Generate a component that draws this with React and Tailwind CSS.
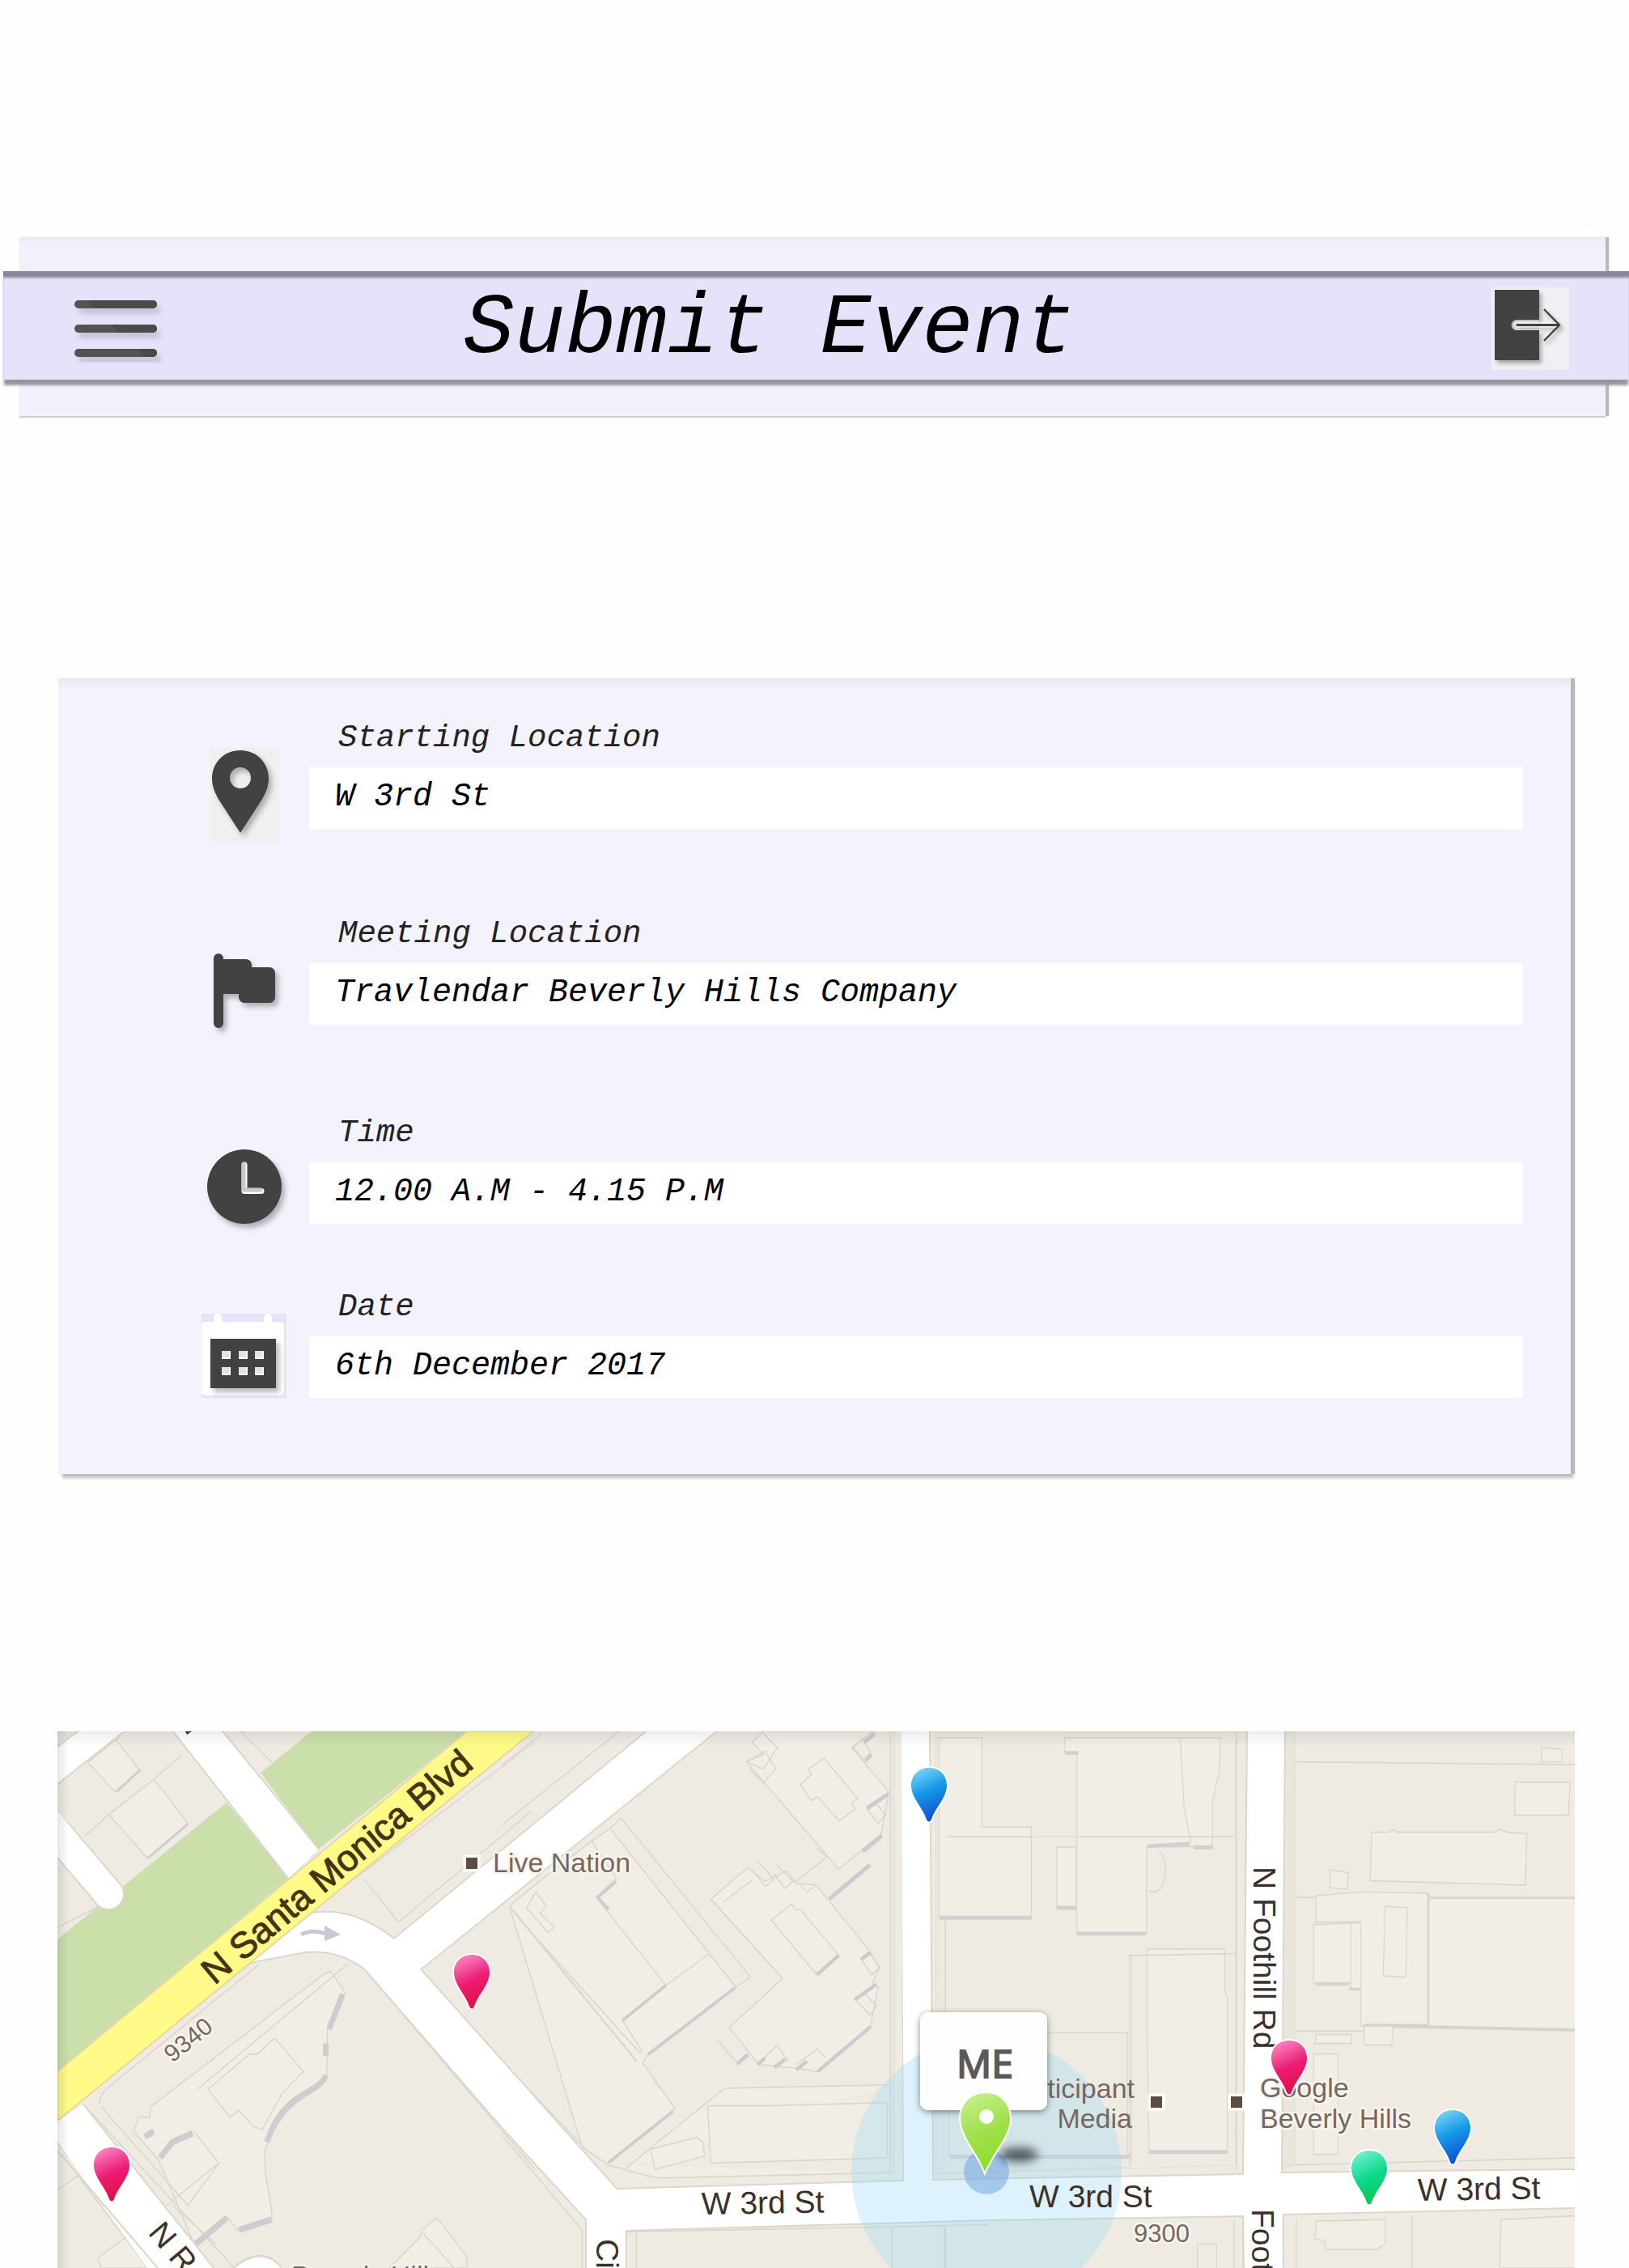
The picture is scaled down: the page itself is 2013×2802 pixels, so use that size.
import React from "react";

const MONO = "font-['Liberation_Mono',monospace] italic";

function MenuIcon() {
  return (
    <svg viewBox="0 0 110 84" className="block h-[84px] w-[110px]" aria-hidden="true">
      <defs>
        <filter id="soft" x="-20%" y="-20%" width="150%" height="150%">
          <feDropShadow dx="5" dy="7" stdDeviation="3" floodColor="#000" floodOpacity="0.14" />
        </filter>
      </defs>
      <g fill="#525252" filter="url(#soft)">
        <rect x="0" y="7" width="102" height="10" rx="5" />
        <rect x="0" y="37" width="102" height="10" rx="5" />
        <rect x="0" y="67" width="102" height="10" rx="5" />
      </g>
      <g fill="#4a4a4a">
        <path d="M17 7h80a5 5 0 0 1 0 10H24z" />
        <path d="M46 37h51a5 5 0 0 1 0 10H54z" />
        <path d="M78 67h19a5 5 0 0 1 0 10H86z" />
      </g>
    </svg>
  );
}

function ExitIcon() {
  return (
    <svg viewBox="0 0 96 102" className="block h-[102px] w-[96px]" aria-hidden="true">
      <defs>
        <filter id="exitShade" x="-20%" y="-20%" width="150%" height="150%">
          <feDropShadow dx="3" dy="4" stdDeviation="2.5" floodColor="#000" floodOpacity="0.3" />
        </filter>
      </defs>
      <rect width="96" height="102" fill="#f0eff3" />
      <path d="M3 2h56v2H4v86H3z" fill="#fff" />
      <path d="M4 3h55v37H31a6.500 6.500 0 0 0 0 13h28v37H4z" fill="#424242" filter="url(#exitShade)" />
      <path d="M59 41H32a5.500 5.500 0 0 0 0 11h27" fill="#dcdbde" />
      <g fill="none" stroke="#424242" filter="url(#exitShade)">
        <path d="M31 46.500H84" strokeWidth="3" />
        <path d="M65 27L84 46.500L65 66" strokeWidth="2.500" />
      </g>
      <path d="M31 44H80M31 49H80" stroke="#fff" strokeWidth="1" />
    </svg>
  );
}

function IconShade({ id }) {
  return (
    <defs>
      <filter id={id} x="-20%" y="-20%" width="150%" height="150%">
        <feDropShadow dx="4" dy="5" stdDeviation="3" floodColor="#000" floodOpacity="0.28" />
      </filter>
    </defs>
  );
}

function PinIcon() {
  return (
    <svg viewBox="0 0 86 116" className="-mb-4 block h-[116px] w-[86px]" aria-hidden="true">
      <IconShade id="pinShade" />
      <rect width="86" height="116" fill="#f1f0f1" />
      <path
        d="M38 3C18 3 3 18 3 38c0 12 6 22 11 30l24 37 24-37c5-8 11-18 11-30C73 18 58 3 38 3zm0 21a13 13 0 1 1 0 26a13 13 0 0 1 0-26z"
        fill="#424242"
        fillRule="evenodd"
        filter="url(#pinShade)"
      />
    </svg>
  );
}

function FlagIcon() {
  return (
    <svg viewBox="0 0 86 100" className="-mb-3 block h-[100px] w-[86px] overflow-visible" aria-hidden="true">
      <IconShade id="flagShade" />
      <path
        d="M11 0a6 6 0 0 1 6 6V7H45a7 7 0 0 1 7 7v3H74a7 7 0 0 1 7 7V54a7 7 0 0 1-7 7H43a7 7 0 0 1-7-7V50H17V86a6 6 0 0 1-12 0V6a6 6 0 0 1 6-6z"
        fill="#424242"
        filter="url(#flagShade)"
      />
      <path d="M17 6H46M53 16H74" stroke="#fff" strokeWidth="1" />
    </svg>
  );
}

function ClockIcon() {
  return (
    <svg viewBox="0 0 92 92" className="block h-[92px] w-[92px] overflow-visible" aria-hidden="true">
      <IconShade id="clockShade" />
      <circle cx="45" cy="45" r="46" fill="#fff" />
      <circle cx="46" cy="46" r="46" fill="#424242" filter="url(#clockShade)" />
      <path d="M46 19V51.500H67" fill="none" stroke="#fff" strokeWidth="7" strokeLinecap="round" strokeLinejoin="round" />
      <path d="M45 18V50H66" fill="none" stroke="#c9c8cd" strokeWidth="5" strokeLinecap="round" strokeLinejoin="round" />
    </svg>
  );
}

function CalendarIcon() {
  return (
    <svg viewBox="0 0 105 104" className="block h-[104px] w-[105px]" aria-hidden="true">
      <IconShade id="calShade" />
      <rect width="105" height="104" fill="#e6e2fa" />
      <rect x="0" y="10" width="102" height="91" rx="5" fill="#fff" />
      <rect x="15" y="0" width="10" height="20" rx="5" fill="#fff" />
      <rect x="77" y="0" width="10" height="20" rx="5" fill="#fff" />
      <rect x="11" y="31" width="81" height="61" fill="#424242" filter="url(#calShade)" />
      {[25, 46, 66].map((x) =>
        [46, 66].map((y) => (
          <g key={x + "-" + y}>
            <rect x={x} y={y} width="11" height="10" fill="#fff" />
            <rect x={x} y={y} width="9" height="8" fill="#e2e2e4" />
          </g>
        ))
      )}
    </svg>
  );
}

function Field({ id, label, value, icon, className = "" }) {
  return (
    <div className={"flex items-end gap-7 " + className}>
      <div className="flex w-[105px] shrink-0 justify-center">{icon}</div>
      <div className="flex min-w-0 flex-1 flex-col">
        <label htmlFor={id} className={"mb-3 pl-9 text-[39px] leading-[48px] text-[#222] " + MONO}>
          {label}
        </label>
        <input
          id={id}
          type="text"
          defaultValue={value}
          className={"h-[76px] w-full bg-white pb-1 pl-8 text-[40px] text-black outline-none " + MONO}
        />
      </div>
    </div>
  );
}

function Drop({ x, y, fill }) {
  return (
    <path
      transform={"translate(" + x + " " + y + ")"}
      d="M0 0C-13 0-22 9-22 22C-22 37-7 50-3 64Q0 69 3 64C7 50 22 37 22 22C22 9 13 0 0 0z"
      fill={fill}
      stroke="#fff"
      strokeWidth="4"
      paintOrder="stroke"
    />
  );
}

function Poi({ x, y }) {
  return <rect x={x - 7} y={y - 7} width="14" height="14" fill="#5c4c42" stroke="#fff" strokeWidth="7" paintOrder="stroke" />;
}

function CityMap() {
  return (
    <svg
      viewBox="0 0 1875 663"
      className="block h-auto w-full font-['Liberation_Sans',sans-serif]"
      role="img"
      aria-label="Map of W 3rd St, Beverly Hills"
    >
      <defs>
        <linearGradient id="pink" x1="0.3" y1="0" x2="0.6" y2="1">
          <stop offset="0" stopColor="#fb84c2" />
          <stop offset="0.5" stopColor="#ec1c74" />
          <stop offset="1" stopColor="#e00f3c" />
        </linearGradient>
        <linearGradient id="blue" x1="0.3" y1="0" x2="0.6" y2="1">
          <stop offset="0" stopColor="#74d4f8" />
          <stop offset="0.45" stopColor="#1597e6" />
          <stop offset="1" stopColor="#1249cf" />
        </linearGradient>
        <linearGradient id="mint" x1="0.3" y1="0" x2="0.6" y2="1">
          <stop offset="0" stopColor="#6df2d0" />
          <stop offset="0.5" stopColor="#0cd98c" />
          <stop offset="1" stopColor="#10c24d" />
        </linearGradient>
        <linearGradient id="lime" x1="0.3" y1="0" x2="0.6" y2="1">
          <stop offset="0" stopColor="#c4ef86" />
          <stop offset="0.5" stopColor="#a0e04c" />
          <stop offset="1" stopColor="#8edb2c" />
        </linearGradient>
        <linearGradient id="topShade" x1="0" y1="0" x2="0" y2="1">
          <stop offset="0" stopColor="#000" stopOpacity="0.07" />
          <stop offset="1" stopColor="#000" stopOpacity="0" />
        </linearGradient>
        <linearGradient id="leftShade" x1="0" y1="0" x2="1" y2="0">
          <stop offset="0" stopColor="#000" stopOpacity="0.1" />
          <stop offset="1" stopColor="#000" stopOpacity="0" />
        </linearGradient>
        <filter id="pop" x="-20%" y="-20%" width="140%" height="140%">
          <feDropShadow dx="0" dy="2" stdDeviation="4" floodColor="#000" floodOpacity="0.45" />
        </filter>
        <filter id="haze" x="-50%" y="-100%" width="200%" height="300%">
          <feGaussianBlur stdDeviation="6" />
        </filter>
      </defs>

      {/* land and parks */}
      <rect width="1875" height="663" fill="#efebe3" />
      <path d="M314 0H506L322 146L251 51z" fill="#cadfaa" />
      <path d="M0 257L209 88L286 181L0 420z" fill="#cadfaa" />

      {/* lot outlines and buildings, west side */}
      <g transform="translate(-11 -19) scale(0.3827 0.435)" fill="#f2eee6" stroke="#dcd7ce" strokeWidth="4">
        <path d="M125 130L215 65L295 155L215 215z" />
        <path d="M195 280L340 180L450 305L320 405z" />
        <path d="M120 340L195 280M340 180L430 110M230 60L130 130M620 43L720 130" fill="none" />
        <path d="M220 215L297 152M322 403L448 308" fill="none" stroke="#d0cdd1" strokeWidth="7" />
        <path d="M1020 465L1130 585L1560 270M930 500L1568 75" fill="none" />
        <path d="M885 735L910 725L958 785L900 890L898 1020C870 1080 760 1080 700 1230C690 1300 720 1370 722 1425L610 1460L575 1420L470 1500L355 1260L275 1180L290 1140L325 1140L330 1110z" />
        <path d="M515 1060L650 960L675 960L730 915L823 1010L755 1070L690 1175L660 1165L615 1120L585 1140z" />
        <path d="M165 1100C165 1080 175 1070 200 1050L680 705M170 1110L450 1390L550 1270L470 1180M120 1110L600 1568M380 1390L550 1270M400 1390L540 1500M480 1060L965 705" fill="none" />
        <path d="M950 790L905 890M895 930V965M895 1020C870 1080 760 1060 705 1210M720 1430L615 1460M575 1425L475 1500M465 1185L400 1210L360 1255M310 1195L340 1180" fill="none" stroke="#cfccd1" strokeWidth="18" />
        <path d="M160 1540L280 1460L420 1568H170zM1100 1568L1200 1480L1205 1460L1255 1425L1350 1535V1568z" />
        <path d="M1210 1470L1310 1568M30 1345L95 1305L320 1568M1020 720L1568 1285" fill="none" />
        <path d="M30 600L165 540M28 400L160 540" fill="none" />
      </g>

      {/* buildings between the boulevard and the first cross street */}
      <g transform="translate(549 -19) scale(0.3827 0.435)" fill="#f2eee6" stroke="#dcd7ce" strokeWidth="4">
        <path d="M25 540L100 485L290 355L350 320L670 675L755 770L470 965L455 985L560 1115L340 1272L260 1225z" />
        <path d="M290 355L370 460L305 515L530 765M530 765L390 865L455 955M530 765L670 675M350 320L385 290L803 742L755 770M80 545L110 500L145 540L125 560L170 600L150 615L80 545M100 620L450 960M490 1040L515 1060" fill="none" />
        <path d="M25 540L435 980" fill="none" strokeWidth="6" />
        <path d="M345 1268L553 1123M472 962L753 772M310 515L370 470M390 865L530 765M310 515L345 550" fill="none" stroke="#cdcbd1" strokeWidth="9" />
        <path d="M845 43L810 75L845 110L790 130L1088 435L1225 335L1250 215L1130 90L1200 43z" />
        <path d="M965 195L1000 165L990 150L1040 120L1150 235L1130 245L1140 265L1090 298L1020 230L1000 240z" />
        <path d="M845 50L890 90L845 150L790 130L850 100L885 150L845 190L800 150M1135 90L1165 65L1190 100L1175 130zM1180 265L1205 245L1240 280L1215 305z" fill="none" />
        <path d="M1170 75L1205 50M1175 125L1195 110M1180 262L1248 222M1165 385L1228 340M1058 520L1190 422" fill="none" stroke="#cdcbd1" strokeWidth="12" />
        <path d="M675 520L795 430L850 470L920 440L950 475L1015 480L1190 670L1220 715L1195 760L1215 770L1190 885L1020 1010L950 1000L830 990L735 885L907 745z" />
        <path d="M715 530L810 465M675 520L907 745M870 580L935 535L950 550L965 550L1088 680L1018 735zM825 410L880 465L850 485L810 440M890 425L940 470L915 490L880 450M950 470L1050 400L1015 375M965 480L985 500L1015 480M695 920L765 990L795 960M830 985L890 935L925 980M950 990L1020 945L1045 970M1160 690L1185 670L1220 715L1195 735zM1140 805L1175 790L1210 825L1190 850z" fill="none" />
        <path d="M1088 680L1018 735M760 988L795 962M825 990L850 972M880 998L915 975M952 1005L985 980M1020 1010L1192 882M1140 805L1210 762M1160 692L1190 672" fill="none" stroke="#cdcbd1" strokeWidth="11" />
        <path d="M400 1285L720 1057L1250 1048M340 1275C400 1285 480 1315 530 1312L1260 1297M665 1107L860 1107L1245 1098V1255L675 1270zM480 1230L630 1197L650 1210L655 1250L495 1288z" />
        <path d="M1255 43V1300M0 140L130 50M380 43L0 310M0 980L265 1225" fill="none" />
        <path d="M1265 43V1300" stroke="#ece2dc" strokeWidth="8" fill="none" />
        <path d="M435 1465V1568M400 1465L1568 1445M0 1190L260 1460V1568M1260 1450V1568M1430 1450V1568" fill="none" />
      </g>

      {/* block around the current position */}
      <g transform="translate(1049 -19) scale(0.3333 0.435)" fill="#f2eee6" stroke="#dcd7ce" strokeWidth="4">
        <path d="M80 43H1265V60L1220 70V1275L110 1300V43z" fill="#ede9df" stroke="#e4dfd3" />
        <path d="M145 60H1218V1275L145 1298z" fill="#efebe3" stroke="none" />
        <path d="M122 62H280V315H463V573H122zM588 62H1165L1160 160L1135 240V370L890 372V620H632V105H588zM558 372H630V545H558zM893 662H1180V780L1190 800V1240H900L893 900z" />
        <path d="M150 900H820V1250H160zM828 1275V680H890M828 680L1218 675M150 343H1218M1015 62L1030 260L1055 360M935 380A40 58 0 0 1 900 495M145 573V840" fill="none" />
        <path d="M122 573H465M632 618H888M588 105H638M895 370L1050 363M1065 373H1137M900 1238H1190M160 1252H830M558 545H630" fill="none" stroke="#d3d0d3" strokeWidth="11" />
        <path d="M463 343H630M835 680V1275M1222 343V1275M110 1300L835 1282" fill="none" stroke="#e8dedb" strokeWidth="6" />
        <path d="M145 1450V1568M1080 1568V1500H1150V1568M1215 1430V1568" fill="none" />
      </g>

      {/* east side */}
      <g transform="translate(1429 -19) scale(0.3333 0.435)" fill="#f2eee6" stroke="#dcd7ce" strokeWidth="4">
        <path d="M260 43H300V1275L248 1285z" fill="#ebe6db" stroke="#e4dfd3" />
        <path d="M305 130L1340 138M305 515H1340M305 895H555M305 1275L1340 1255" fill="none" />
        <path d="M1215 88L1290 95V130H1215zM1118 188H1320L1315 282H1115zM585 330H650L660 322L680 330H1040L1060 322L1090 330L1160 335L1155 480L580 468zM432 437L498 445L495 492L430 487z" />
        <path d="M795 518H1340V890L795 880zM378 510L545 500L795 503V877L545 880V585H378zM370 592L508 588V758H370zM508 588H545V775H508zM635 540L717 545L712 742L628 738zM558 880H663L660 935H558zM378 905H510V930H375zM370 960H460V1245H370z" />
        <path d="M378 762H500M503 776H543M665 882L1340 892M795 503V877M555 878H795" fill="none" stroke="#d5d2d4" strokeWidth="8" />
        <path d="M380 1435L635 1430V1500L600 1515H415L410 1490L375 1485zM1065 1430L1340 1420V1568H1060z" />
        <path d="M735 1420V1568M305 1430V1568M85 43V1290" fill="none" />
      </g>

      {/* street casings */}
      <g fill="none" stroke="#ddd6cc" strokeWidth="4">
        <path d="M144 0L286 181M203 0L322 146M0 20L27 0M81 0L0 64" />
        <path d="M314 225C350 220 380 230 416 257L729 0M813 0L448 294L691 566L1046 556V0M238 285L306 272Q345 268 379 292L549 488L654 603V663M702 663V616L1149 603L1466 598V663M1077 0L1081 555L1466 548L1471 0M1516 0L1512 546L1875 542M1514 663V596L1875 588M0 507L130 663M31 461L192 663" />
        <path d="M0 127L63 201" strokeWidth="40" strokeLinecap="round" />
        <path d="M219 663Q253 634 276 663" />
      </g>
      {/* streets */}
      <g fill="#fff">
        <path d="M144 0H203L322 146L286 181z" />
        <path d="M0 20L27 0H81L0 64z" />
        <path d="M-10 115L63 201" fill="none" stroke="#fff" strokeWidth="36" strokeLinecap="round" />
        <path d="M314 225C350 220 380 230 416 257L729 0H813L448 294L691 566L1046 556L1043 0H1077L1081 555L1466 548L1471 0H1516L1512 546L1875 542V588L1514 596V663H1467L1466 598L1149 603L702 616V663H654V603L549 488L379 292Q345 268 306 272L238 285z" />
        <path d="M0 481L31 461L192 663H111L0 507z" />
        <path d="M219 663Q253 636 276 663z" />
      </g>
      <path d="M0 420L506 0H588L0 481z" fill="#fffb88" stroke="#ead5a8" strokeWidth="2" />
      <path d="M0 518L124 663" stroke="#dcd5ca" strokeWidth="2" />
      <path d="M301 251Q315 244 332 250" fill="none" stroke="#c9c9d3" strokeWidth="5" />
      <path d="M330 240L350 251L330 259z" fill="#c9c9d3" />
      <path d="M158 0L166 0L160 4z" fill="#333" />

      {/* accuracy circle */}
      <circle cx="1148" cy="544" r="167" fill="#9bd9f7" fillOpacity="0.34" />

      {/* street names */}
      <g fill="#3c3129" fontSize="39" stroke="#fff" strokeWidth="4" paintOrder="stroke" strokeLinejoin="round">
        <text transform="translate(194 314) rotate(-40)" fontSize="45" stroke="#45330f" strokeWidth="1" fill="#45330f">N Santa Monica Blvd</text>
        <text x="796" y="597" transform="rotate(-1 796 597)">W 3rd St</text>
        <text x="1201" y="588" stroke="none">W 3rd St</text>
        <text x="1681" y="580" transform="rotate(-1 1681 580)">W 3rd St</text>
        <text transform="translate(1478 167) rotate(90)">N Foothill Rd</text>
        <text transform="translate(1476 590) rotate(90)">Foot</text>
        <text transform="translate(666 627) rotate(90)">Ci</text>
        <text transform="translate(111 620) rotate(50)">N R</text>
      </g>
      <g fill="#76685f" fontSize="34" stroke="#f7f5f0" strokeWidth="5" paintOrder="stroke" strokeLinejoin="round">
        <text x="538" y="174">Live Nation</text>
        <text x="1331" y="453" textAnchor="end" stroke="none">Participant</text>
        <text x="1328" y="490" textAnchor="end" stroke="none">Media</text>
        <text x="1486" y="452">Google</text>
        <text x="1486" y="490">Beverly Hills</text>
        <text x="289" y="684">Beverly Hills</text>
        <text x="1330" y="631" fontSize="31">9300</text>
        <text transform="translate(142 410) rotate(-39)" fontSize="30">9340</text>
      </g>
      <Poi x={512} y={163} />
      <Poi x={1358} y={458} />
      <Poi x={1457} y={458} />

      {/* places */}
      <Drop x={1077} y={45} fill="url(#blue)" />
      <Drop x={512} y={276} fill="url(#pink)" />
      <Drop x={67} y={514} fill="url(#pink)" />
      <Drop x={1522} y={382} fill="url(#pink)" />
      <Drop x={1621} y={518} fill="url(#mint)" />
      <Drop x={1724} y={468} fill="url(#blue)" />

      {/* current position */}
      <rect x="1066" y="347" width="157" height="121" rx="10" fill="#fefefe" filter="url(#pop)" />
      <text x="1146" y="428" textAnchor="middle" fontSize="48" fill="#5a5a5a" className="font-['Open_Sans',sans-serif]" stroke="#5a5a5a" strokeWidth="2">
        ME
      </text>
      <circle cx="1148" cy="544" r="28" fill="#6a9fe0" fillOpacity="0.5" />
      <ellipse cx="1188" cy="523" rx="24" ry="9" fill="#000" fillOpacity="0.6" filter="url(#haze)" />
      <path
        d="M1147 447C1129 447 1116 460 1116 478C1116 500 1137 520 1146 544C1156 520 1177 500 1177 478C1177 460 1165 447 1147 447z"
        fill="url(#lime)"
        stroke="#fff"
        strokeWidth="4"
        paintOrder="stroke"
      />
      <circle cx="1148" cy="476" r="9" fill="#fff" />

      <rect width="1875" height="20" fill="url(#topShade)" />
      <rect width="14" height="663" fill="url(#leftShade)" />
    </svg>
  );
}

export default function App() {
  return (
    <div className="min-h-screen w-full overflow-hidden bg-[#fefefe]">
      <div className="flex flex-col">
        <div className="ml-6 mr-12 mt-[278px] h-px bg-[#fafafa]" />
        <header className="ml-6 mr-[29px] mt-[14px] bg-[#f2f0fb] pb-[45px] pt-[42px] shadow-[inset_0_6px_5px_-2px_#ebe9f0,4px_0_1px_0_#b9b9b9,0_2px_1px_0_#d2d1d6]">
          <div className="-ml-5 -mr-[29px] flex h-[134px] items-center bg-[#e6e2fa] pl-[88px] pr-[74px] pt-2 shadow-[inset_0_9px_3px_-1px_#8a8799,0_8px_3px_-1px_#98969c]">
            <button type="button" aria-label="Menu" className="shrink-0 cursor-pointer">
              <MenuIcon />
            </button>
            <h1 className={"flex-1 pr-[144px] pt-1 text-center text-[105px] leading-[110px] whitespace-nowrap text-black " + MONO}>
              Submit Event
            </h1>
            <button type="button" aria-label="Log out" className="shrink-0 cursor-pointer">
              <ExitIcon />
            </button>
          </div>
        </header>

        <div className="ml-[72px] mr-[78px] mt-[255px] h-[3px] bg-[#fbfbfb]" />

        <form className="ml-[72px] mr-[72px] mt-[66px] flex flex-col bg-[#f4f2fc] pb-[94px] pl-[177px] pr-[59px] pt-[50px] shadow-[inset_0_10px_8px_-4px_#e9e7ee,5px_0_1px_0_#b9b9b9,4px_6px_4px_-1px_#bcbcbc]">
          <Field id="start" label="Starting Location" value="W 3rd St" icon={<PinIcon />} />
          <Field id="meeting" label="Meeting Location" value="Travlendar Beverly Hills Company" icon={<FlagIcon />} className="mt-[106px]" />
          <Field id="time" label="Time" value="12.00 A.M - 4.15 P.M" icon={<ClockIcon />} className="mt-[110px]" />
          <Field id="date" label="Date" value="6th December 2017" icon={<CalendarIcon />} className="mt-[79px]" />
        </form>

        <section aria-label="Map" className="ml-[71px] mr-[67px] mt-[318px]">
          <CityMap />
        </section>
      </div>
    </div>
  );
}
